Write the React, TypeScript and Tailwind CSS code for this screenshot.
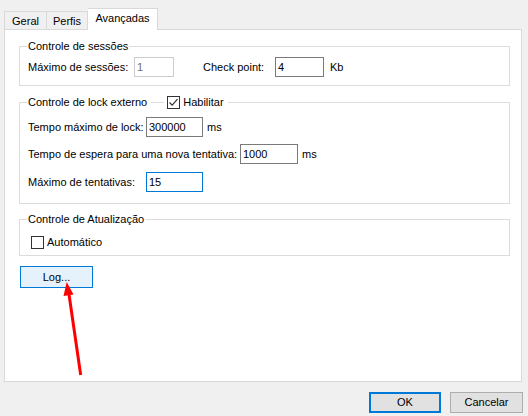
function CheckBox({ checked }: { checked?: boolean }) {
  return (
    <span className="inline-flex h-[13px] w-[13px] items-center justify-center border border-[#333333] bg-white">
      {checked && (
        <svg width="11" height="11" viewBox="0 0 11 11">
          <path d="M1.5 5.5 L4.2 8.2 L9.5 2.2" fill="none" stroke="#333333" strokeWidth="1.2" />
        </svg>
      )}
    </span>
  );
}

function TextBox({ value, width, focused, disabled }: { value: string; width: string; focused?: boolean; disabled?: boolean }) {
  const border = focused ? "border-[#0078d7]" : disabled ? "border-[#cccccc]" : "border-[#7a7a7a]";
  const color = disabled ? "text-[#6d6d6d]" : "text-black";
  return (
    <div className={`flex h-[20px] items-center border bg-white pl-[2px] ${width} ${border} ${color}`}>
      {value}
    </div>
  );
}

export default function App() {
  return (
    <div className="relative h-[416px] w-[528px] overflow-hidden bg-[#f0f0f0] font-['Liberation_Sans',Arial,sans-serif] text-[11px] leading-[13px] text-black">
      {/* Tabs */}
      <div className="flex h-[29px] items-end pl-[4px]">
        <div className="flex h-[18px] w-[43px] items-center justify-center border border-b-0 border-[#d9d9d9] bg-[#f0f0f0] pt-[2px]">
          Geral
        </div>
        <div className="flex h-[18px] w-[41px] items-center justify-center border border-b-0 border-l-0 border-[#d9d9d9] bg-[#f0f0f0] pt-[2px]">
          Perfis
        </div>
        <div className="relative z-10 mb-[-1px] flex h-[22px] w-[70px] items-start justify-center border border-b-0 border-l-0 border-[#d9d9d9] bg-white pt-[3px]">
          Avançadas
        </div>
      </div>

      {/* Tab page */}
      <div className="ml-[4px] h-[353px] w-[518px] border border-[#d9d9d9] bg-white pl-[14px]">
        {/* Controle de sessões */}
        <fieldset className="mt-[10px] w-[491px] border border-[#dcdcdc] px-[8px] pb-[8px] pt-[4px]">
          <legend className="ml-[-1px] px-[1px]">Controle de sessões</legend>
          <div className="flex items-center">
            <span className="w-[106px]">Máximo de sessões:</span>
            <TextBox value="1" width="w-[40px]" disabled />
            <span className="ml-[29px] w-[72px]">Check point:</span>
            <TextBox value="4" width="w-[49px]" />
            <span className="ml-[6px]">Kb</span>
          </div>
        </fieldset>

        {/* Controle de lock externo */}
        <fieldset className="mt-[10px] w-[491px] border border-[#dcdcdc] px-[8px] pb-[11px] pt-[8px]">
          <legend className="ml-[-1px] flex items-center px-[1px]">
            <span>Controle de lock externo</span>
            <span className="ml-[4px] mr-[3px] h-px w-[13px] bg-[#dcdcdc]" />
            <CheckBox checked />
            <span className="ml-[3px] pr-[3px]">Habilitar</span>
          </legend>
          <div className="flex flex-col gap-[7px]">
            <div className="flex items-center">
              <span className="w-[118px]">Tempo máximo de lock:</span>
              <TextBox value="300000" width="w-[57px]" />
              <span className="ml-[4px]">ms</span>
            </div>
            <div className="flex items-center">
              <span className="w-[212px]">Tempo de espera para uma nova tentativa:</span>
              <TextBox value="1000" width="w-[58px]" />
              <span className="ml-[4px]">ms</span>
            </div>
            <div className="mt-px flex items-center">
              <span className="w-[118px]">Máximo de tentativas:</span>
              <TextBox value="15" width="w-[57px]" focused />
            </div>
          </div>
        </fieldset>

        {/* Controle de Atualização */}
        <fieldset className="mt-[9px] w-[491px] border border-[#dcdcdc] px-[11px] pb-[6px] pt-[10px]">
          <legend className="ml-[-4px] px-[1px]">Controle de Atualização</legend>
          <div className="flex items-center gap-[3px]">
            <CheckBox />
            <span>Automático</span>
          </div>
        </fieldset>

        <button className="ml-px mt-[10px] flex h-[22px] w-[73px] items-center justify-center border border-[#0078d7] bg-[#e5f1fb]">
          Log...
        </button>
      </div>

      {/* Dialog buttons */}
      <div className="mt-[10px] flex justify-end gap-[9px] pr-[5px]">
        <button className="flex h-[21px] w-[72px] items-center justify-center border-2 border-[#0078d7] bg-[#e1e1e1]">
          OK
        </button>
        <button className="flex h-[21px] w-[73px] items-center justify-center border border-[#adadad] bg-[#e1e1e1]">
          Cancelar
        </button>
      </div>

      {/* Red annotation arrow */}
      <svg className="pointer-events-none absolute left-0 top-0" width="528" height="416" viewBox="0 0 528 416">
        <line x1="80.7" y1="375" x2="68.8" y2="293" stroke="#ff0000" strokeWidth="3" />
        <polygon points="66.7,282 73.5,294.5 63.5,296" fill="#ff0000" />
      </svg>
    </div>
  );
}
